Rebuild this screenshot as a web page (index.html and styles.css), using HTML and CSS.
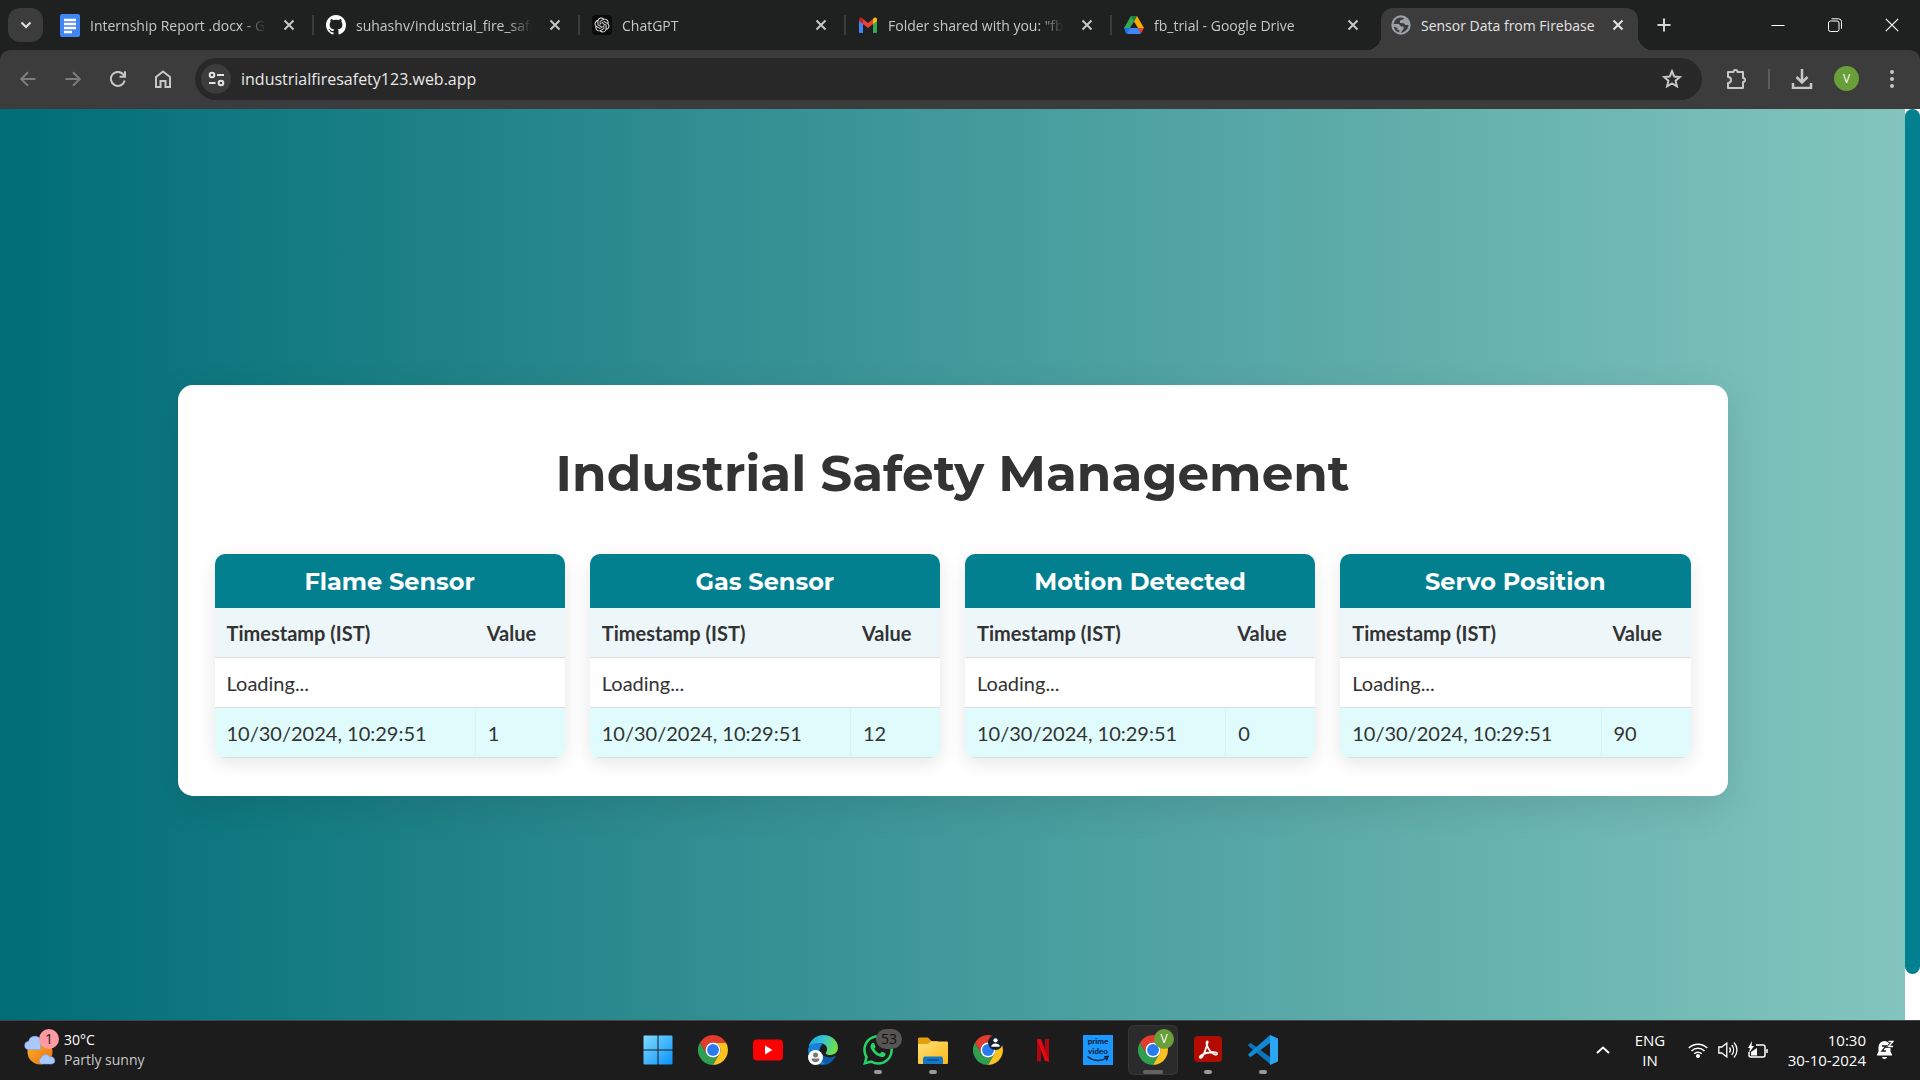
FILE: index.html
```html
<!DOCTYPE html>
<html lang="en">
<head>
<meta charset="utf-8">
<title>Sensor Data from Firebase</title>
<link rel="stylesheet" href="styles.css">
</head>
<body>
<svg class="defs" aria-hidden="true">
  <symbol id="close" viewBox="0 0 12 12"><path d="M1.5 1.5l9 9M10.5 1.5l-9 9" stroke="currentColor" stroke-width="2" fill="none"/></symbol>
  <symbol id="chrome" viewBox="0 0 48 48">
    <path fill="#2f9e4f" d="M13.61 30L3.215 12A24 24 0 0 0 24 48L34.39 30A12 12 0 0 1 13.61 30Z"/>
    <path fill="#fcc31e" d="M34.39 30L24 48A24 24 0 0 0 44.78 12H24A12 12 0 0 1 34.39 30Z"/>
    <path fill="#e33b2e" d="M24 12H44.78A24 24 0 0 0 3.215 12L13.61 30A12 12 0 0 1 24 12Z"/>
    <circle cx="24" cy="24" r="12" fill="#fff"/><circle cx="24" cy="24" r="9.5" fill="#2a7bee"/>
  </symbol>
</svg>

<header class="browser">
  <div class="tabstrip">
    <button class="tab-search" aria-label="Search tabs"><svg width="12" height="8" viewBox="0 0 12 8"><path d="M1.5 1.5L6 6l4.500-4.500" fill="none" stroke="#e3e3e3" stroke-width="2"/></svg></button>
    <nav class="tabs">
      <div class="tab">
        <svg class="favicon" viewBox="0 0 20 23"><rect width="20" height="23" rx="2" fill="#4285f4"/><path d="M4 6h12M4 10h12M4 14h12M4 18h8" stroke="#fff" stroke-width="2.300"/></svg>
        <a href="#" class="tab-title">Internship Report .docx - G</a>
        <button class="tab-close" aria-label="Close tab"><svg><use href="#close"/></svg></button>
      </div>
      <div class="tab">
        <svg class="favicon" viewBox="0 0 16 16"><path fill="#fff" d="M8 0C3.580 0 0 3.580 0 8c0 3.540 2.290 6.530 5.470 7.590.4.070.55-.17.55-.38 0-.19-.01-.82-.01-1.490-2.010.37-2.530-.49-2.690-.94-.09-.23-.48-.94-.82-1.130-.28-.15-.68-.52-.01-.53.63-.01 1.080.58 1.230.82.72 1.210 1.870.87 2.330.66.070-.52.28-.87.51-1.070-1.780-.2-3.640-.89-3.640-3.950 0-.87.31-1.590.82-2.150-.08-.2-.36-1.020.08-2.120 0 0 .67-.21 2.200.82.64-.18 1.320-.27 2-.27s1.360.09 2 .27c1.530-1.040 2.200-.82 2.200-.82.44 1.100.16 1.920.08 2.120.51.56.82 1.270.82 2.150 0 3.070-1.870 3.750-3.650 3.950.29.25.54.73.54 1.480 0 1.070-.01 1.930-.01 2.200 0 .21.15.46.55.38A8.010 8.010 0 0 0 16 8c0-4.420-3.580-8-8-8z"/></svg>
        <a href="#" class="tab-title">suhashv/industrial_fire_safe</a>
        <button class="tab-close" aria-label="Close tab"><svg><use href="#close"/></svg></button>
      </div>
      <div class="tab">
        <svg class="favicon" viewBox="-4 -4 32 32"><rect x="-4" y="-4" width="32" height="32" rx="6" fill="#0b0b0b"/><path fill="#e8e8e8" d="M22.2819 9.8211a5.9847 5.9847 0 0 0-.5157-4.9108 6.0462 6.0462 0 0 0-6.5098-2.9A6.0651 6.0651 0 0 0 4.9807 4.1818a5.9847 5.9847 0 0 0-3.9977 2.9 6.0462 6.0462 0 0 0 .7427 7.0966 5.98 5.98 0 0 0 .511 4.9107 6.051 6.051 0 0 0 6.5146 2.9001A5.9847 5.9847 0 0 0 13.2599 24a6.0557 6.0557 0 0 0 5.7718-4.2058 5.9894 5.9894 0 0 0 3.9977-2.9001 6.0557 6.0557 0 0 0-.7475-7.0729zm-9.022 12.6081a4.4755 4.4755 0 0 1-2.8764-1.0408l.1419-.0804 4.7783-2.7582a.7948.7948 0 0 0 .3927-.6813v-6.7369l2.02 1.1686a.071.071 0 0 1 .038.052v5.5826a4.504 4.504 0 0 1-4.4945 4.4944zm-9.6607-4.1254a4.4708 4.4708 0 0 1-.5346-3.0137l.142.0852 4.783 2.7582a.7712.7712 0 0 0 .7806 0l5.8428-3.3685v2.3324a.0804.0804 0 0 1-.0332.0615L9.74 19.9502a4.4992 4.4992 0 0 1-6.1408-1.6464zM2.3408 7.8956a4.485 4.485 0 0 1 2.3655-1.9728V11.6a.7664.7664 0 0 0 .3879.6765l5.8144 3.3543-2.0201 1.1685a.0757.0757 0 0 1-.071 0l-4.8303-2.7865A4.504 4.504 0 0 1 2.3408 7.872zm16.5963 3.8558L13.1038 8.364 15.1192 7.2a.0757.0757 0 0 1 .071 0l4.8303 2.7913a4.4944 4.4944 0 0 1-.6765 8.1042v-5.6772a.79.79 0 0 0-.407-.667zm2.0107-3.0231l-.142-.0852-4.7735-2.7818a.7759.7759 0 0 0-.7854 0L9.409 9.2297V6.8974a.0662.0662 0 0 1 .0284-.0615l4.8303-2.7866a4.4992 4.4992 0 0 1 6.6802 4.66zM8.3065 12.863l-2.02-1.1638a.0804.0804 0 0 1-.038-.0567V6.0742a4.4992 4.4992 0 0 1 7.3757-3.4537l-.142.0805L8.704 5.459a.7948.7948 0 0 0-.3927.6813zm1.0976-2.3654l2.602-1.4998 2.6069 1.4998v2.9994l-2.5974 1.4997-2.6067-1.4997Z"/></svg>
        <a href="#" class="tab-title">ChatGPT</a>
        <button class="tab-close" aria-label="Close tab"><svg><use href="#close"/></svg></button>
      </div>
      <div class="tab">
        <svg class="favicon" viewBox="0 0 20 20"><path fill="#4285f4" d="M1 5l4 3v10H2a1 1 0 0 1-1-1z"/><path fill="#34a853" d="M19 5l-4 3v10h3a1 1 0 0 0 1-1z"/><path fill="#ea4335" d="M5 4l5 4 5-4v5l-5 4-5-4z"/><path fill="#c5221f" d="M1 5c0-3 2.500-3 4-1v5L1 6z"/><path fill="#fbbc04" d="M19 5c0-3-2.500-3-4-1v5l4-3z"/></svg>
        <a href="#" class="tab-title">Folder shared with you: "fb</a>
        <button class="tab-close" aria-label="Close tab"><svg><use href="#close"/></svg></button>
      </div>
      <div class="tab">
        <svg class="favicon" viewBox="0 0 20 20"><path fill="#34a853" d="M7 1h3v5.500L5 14.500 0 13z"/><path fill="#188038" d="M7 1h6l-3 5.500z"/><path fill="#fbab00" d="M13 1l7 12h-6L10 6.500z"/><path fill="#1a73e8" d="M0 13h6l-3 6-1-.500z"/><path fill="#4285f4" d="M6 13h8l3 5-1 1H4l-1-1z"/><path fill="#ea4335" d="M14 13h6l-3 5.500z"/></svg>
        <a href="#" class="tab-title">fb_trial - Google Drive</a>
        <button class="tab-close" aria-label="Close tab"><svg><use href="#close"/></svg></button>
      </div>
      <div class="tab active">
        <svg class="favicon" viewBox="0 0 20 20"><circle cx="10" cy="10" r="9.700" fill="#9aa0a6"/><path fill="#3c3c3c" d="M8.500 2.500c-3 .7-5.500 3.200-6 6.500h5.300l2.400 2.500h2.300V14l-2.800 3.700c4-.2 7.600-3.500 7.800-7.700h-3L12.800 8.300 9 8V5.500l4.500-1.700c-1.500-1-3.300-1.500-5-1.300zM2.600 11.500c.5 3 2.800 5.400 5.700 6V15H6.500v-2z"/></svg>
        <a href="#" class="tab-title">Sensor Data from Firebase</a>
        <button class="tab-close" aria-label="Close tab"><svg><use href="#close"/></svg></button>
      </div>
    </nav>
    <button class="new-tab" aria-label="New tab"><svg width="14" height="14" viewBox="0 0 14 14"><path d="M7 .5v13M.5 7h13" stroke="#d5d5d5" stroke-width="2"/></svg></button>
    <div class="window-controls">
      <button aria-label="Minimize"><svg width="14" height="14" viewBox="0 0 14 14"><path d="M.5 7.500h13" stroke="#fff"/></svg></button>
      <button aria-label="Restore"><svg width="14" height="14" viewBox="0 0 14 14" fill="none" stroke="#fff"><rect x=".5" y="3" width="10.500" height="10.500" rx="2"/><path d="M3.500.8h7a3 3 0 0 1 3 3v7"/></svg></button>
      <button aria-label="Close"><svg width="14" height="14" viewBox="0 0 14 14"><path d="M.8.8l12.400 12.400M13.200.8L.8 13.200" stroke="#fff" stroke-width="1.200"/></svg></button>
    </div>
  </div>

  <div class="toolbar">
    <button class="tool dim" aria-label="Back"><svg width="16" height="16" viewBox="0 0 16 16"><path d="M15.500 8H1.500M8 1.200L1.200 8 8 14.800"/></svg></button>
    <button class="tool dim" aria-label="Forward"><svg width="16" height="16" viewBox="0 0 16 16"><path d="M.5 8h14M8 1.200L14.800 8 8 14.800"/></svg></button>
    <button class="tool" aria-label="Reload"><svg width="16" height="16" viewBox="0 0 16 16"><path d="M14.700 9.500A7 7 0 1 1 13.500 3.700L15 5.500M15 .3v5.500H9.500"/></svg></button>
    <button class="tool" aria-label="Home"><svg width="16" height="18" viewBox="0 0 16 18"><path d="M1 7l7-5.500L15 7v10h-4.500v-6h-5v6H1z"/></svg></button>
    <div class="omnibox">
      <button class="site-info" aria-label="View site information"><svg width="17" height="16" viewBox="0 0 17 16" fill="none" stroke="#e3e3e3" stroke-width="2"><circle cx="4" cy="4" r="2.300"/><path d="M9 4h7M1 12h6.500"/><circle cx="13" cy="12" r="2.300"/></svg></button>
      <input class="url" type="text" aria-label="Address" value="industrialfiresafety123.web.app">
      <button class="tool" aria-label="Bookmark"><svg width="20" height="19" viewBox="0 0 20 19"><path d="M10 2.200l2.200 5.300 5.700.5-4.300 3.700 1.300 5.600L10 14.300l-4.900 3 1.300-5.600L2.100 8l5.700-.5z"/></svg></button>
    </div>
    <button class="tool" aria-label="Extensions"><svg width="22" height="22" viewBox="0 0 22 22"><path d="M2 4h5.500a2 2 0 0 1 4 0H17v6a2 2 0 0 1 0 4v6H2v-5a3 3 0 0 0 0-6z" stroke-linejoin="round"/></svg></button>
    <span class="tool-divider"></span>
    <button class="tool" aria-label="Downloads"><svg width="22" height="20" viewBox="0 0 22 20"><path d="M11 0v13M5.500 8L11 13.500 16.500 8M2 14v5h18v-5" stroke-width="2.500"/></svg></button>
    <button class="tool" aria-label="Profile"><span class="avatar">V</span></button>
    <button class="tool" aria-label="Menu"><svg width="4" height="18" viewBox="0 0 4 18"><g fill="#c7c7c7" stroke="none"><circle cx="2" cy="2" r="2"/><circle cx="2" cy="9" r="2"/><circle cx="2" cy="16" r="2"/></g></svg></button>
  </div>
</header>

<div class="viewport">
  <main class="page">
    <section class="panel">
      <h1>Industrial Safety Management</h1>
      <div class="sensors">
        <article class="sensor">
          <h2 id="flame">Flame Sensor</h2>
          <table aria-labelledby="flame">
            <thead><tr><th>Timestamp (IST)</th><th class="value">Value</th></tr></thead>
            <tbody><tr><td colspan="2">Loading...</td></tr><tr><td>10/30/2024, 10:29:51</td><td>1</td></tr></tbody>
          </table>
        </article>
        <article class="sensor">
          <h2 id="gas">Gas Sensor</h2>
          <table aria-labelledby="gas">
            <thead><tr><th>Timestamp (IST)</th><th class="value">Value</th></tr></thead>
            <tbody><tr><td colspan="2">Loading...</td></tr><tr><td>10/30/2024, 10:29:51</td><td>12</td></tr></tbody>
          </table>
        </article>
        <article class="sensor">
          <h2 id="motion">Motion Detected</h2>
          <table aria-labelledby="motion">
            <thead><tr><th>Timestamp (IST)</th><th class="value">Value</th></tr></thead>
            <tbody><tr><td colspan="2">Loading...</td></tr><tr><td>10/30/2024, 10:29:51</td><td>0</td></tr></tbody>
          </table>
        </article>
        <article class="sensor">
          <h2 id="servo">Servo Position</h2>
          <table aria-labelledby="servo">
            <thead><tr><th>Timestamp (IST)</th><th class="value">Value</th></tr></thead>
            <tbody><tr><td colspan="2">Loading...</td></tr><tr><td>10/30/2024, 10:29:51</td><td>90</td></tr></tbody>
          </table>
        </article>
      </div>
    </section>
  </main>
  <div class="scrollbar"><div class="thumb"></div></div>
</div>

<footer class="taskbar">
  <button class="weather">
    <svg width="32" height="36" viewBox="0 0 32 36"><defs><linearGradient id="sun" x1="0" y1="0" x2="1" y2="1"><stop offset="0" stop-color="#f5b731"/><stop offset="1" stop-color="#f06c0c"/></linearGradient></defs><circle cx="16" cy="20" r="12.500" fill="url(#sun)"/><path fill="#a9c8fb" stroke="#7fa5ee" stroke-width=".6" d="M5 17.500a4 4 0 0 1-.5-8 6.500 6.500 0 0 1 12-2V17.500z"/><path fill="#a9c8fb" stroke="#7fa5ee" stroke-width=".6" d="M17 32a3.500 3.500 0 0 1 0-6 5 5 0 0 1 9-1 3.600 3.600 0 0 1 2 7z"/></svg>
    <span class="badge weather-badge">1</span>
    <span class="weather-text"><span class="temp">30°C</span><span class="sky">Partly sunny</span></span>
  </button>

  <nav class="apps">
    <button class="app" aria-label="Start"><svg viewBox="0 0 30 30"><defs><linearGradient id="win" x1="0" y1="0" x2="1" y2="1"><stop offset="0" stop-color="#7fdcff"/><stop offset="1" stop-color="#0a92fb"/></linearGradient></defs><path fill="url(#win)" d="M1.500.5h13v14H.5v-13a1 1 0 0 1 1-1zM15.500.5h13a1 1 0 0 1 1 1v13h-14zM.5 15.500h14v14h-13a1 1 0 0 1-1-1zM15.500 15.500h14v13a1 1 0 0 1-1 1h-13z"/></svg></button>
    <button class="app" aria-label="Chrome"><svg><use href="#chrome"/></svg></button>
    <button class="app" aria-label="YouTube"><svg viewBox="0 0 30 30"><rect y="4.500" width="30" height="21" rx="4" fill="#f00"/><path d="M12 10.500l7.500 4.500-7.500 4.500z" fill="#fff"/></svg></button>
    <button class="app" aria-label="Edge"><svg viewBox="0 0 30 30"><defs><linearGradient id="edge" x1="0" y1="0" x2="1" y2=".3"><stop offset="0" stop-color="#1a9fe0"/><stop offset=".5" stop-color="#35c1d8"/><stop offset="1" stop-color="#6be04b"/></linearGradient></defs><path fill="#0d5cab" d="M1 13C2 6 10 5 15 9c-5 3-4 10 1 12 4 2 8 2 12-.5C25 27 20 30 15 30 7 30 0 24 1 13z"/><path fill="#1683d8" d="M0 14c3-7 11-8 14-4-5 4-4 13 3 19C9 31 0 25 0 14z"/><path fill="url(#edge)" d="M.5 12C2 5 8 0 15 0c9 0 15 6 15 12.500 0 5-4 7.500-8 7.500-3 0-5-1.200-4-2.500 3-4 0-9.500-6.500-9.500C6 8 2 10 .5 12z"/><circle cx="7.500" cy="22.500" r="7.500" fill="#fff"/><circle cx="7.500" cy="20" r="2.500" fill="#777"/><path fill="#777" d="M3.500 23.500h8c0 5-8 5-8 0z"/></svg></button>
    <button class="app running" aria-label="WhatsApp"><svg viewBox="0 0 24 24"><path fill="#25d366" d="M17.472 14.382c-.297-.149-1.758-.867-2.030-.967-.273-.099-.471-.148-.67.15-.197.297-.767.966-.94 1.164-.173.199-.347.223-.644.075-.297-.15-1.255-.463-2.390-1.475-.883-.788-1.480-1.761-1.653-2.059-.173-.297-.018-.458.13-.606.134-.133.298-.347.446-.52.149-.174.198-.298.298-.497.099-.198.050-.371-.025-.52-.075-.149-.669-1.612-.916-2.207-.242-.579-.487-.5-.669-.51-.173-.008-.371-.01-.57-.01-.198 0-.52.074-.792.372-.272.297-1.040 1.016-1.040 2.479 0 1.462 1.065 2.875 1.213 3.074.149.198 2.096 3.200 5.077 4.487.709.306 1.262.489 1.694.625.712.227 1.360.195 1.871.118.571-.085 1.758-.719 2.006-1.413.248-.694.248-1.289.173-1.413-.074-.124-.272-.198-.57-.347m-5.421 7.403h-.004a9.870 9.870 0 0 1-5.031-1.378l-.361-.214-3.741.982.998-3.648-.235-.374a9.860 9.860 0 0 1-1.510-5.260c.001-5.450 4.436-9.884 9.888-9.884 2.640 0 5.122 1.030 6.988 2.898a9.825 9.825 0 0 1 2.893 6.994c-.003 5.450-4.437 9.884-9.885 9.884m8.413-18.297A11.815 11.815 0 0 0 12.050 0C5.495 0 .16 5.335.157 11.892c0 2.096.547 4.142 1.588 5.945L.057 24l6.305-1.654a11.882 11.882 0 0 0 5.683 1.448h.005c6.554 0 11.890-5.335 11.893-11.893a11.821 11.821 0 0 0-3.480-8.413Z"/></svg><span class="badge count">53</span></button>
    <button class="app running" aria-label="File Explorer"><svg viewBox="0 0 30 30"><defs><linearGradient id="folder" x1="0" y1="0" x2="1" y2="1"><stop offset="0" stop-color="#ffe07a"/><stop offset="1" stop-color="#fdb813"/></linearGradient></defs><path fill="#e2a10c" d="M0 4a1.500 1.500 0 0 1 1.500-1.500H10L13.500 6H20v6H0z"/><path fill="url(#folder)" d="M0 9h10l3-2.500h16a1 1 0 0 1 1 1V28a1 1 0 0 1-1 1H1a1 1 0 0 1-1-1z"/><path fill="#1478c8" d="M5 29v-5.500a2 2 0 0 1 2-2h16a2 2 0 0 1 2 2V29z"/><path d="M9 25h12" stroke="#0a4f8f" stroke-width="1.500"/></svg></button>
    <button class="app" aria-label="Chrome, second profile"><svg><use href="#chrome"/></svg><span class="badge person"><svg viewBox="0 0 14 14"><circle cx="7" cy="5" r="2" fill="#fff"/><path d="M3 11c0-4 8-4 8 0z" fill="#fff"/></svg></span></button>
    <button class="app" aria-label="Netflix"><svg viewBox="0 0 30 30"><path fill="#b1060f" d="M9 4h4v22l-4 .5zM17 4h4v22.500l-4-.5z"/><path fill="#e50914" d="M9 4h4l8 22.500-4-.5z"/></svg></button>
    <button class="app" aria-label="Prime Video"><svg viewBox="0 0 30 30"><rect width="30" height="30" fill="#1a98ff"/><text class="prime" x="15" y="9">prime</text><text class="prime" x="15" y="19">video</text><path d="M4.500 21.500c6 5 14 5 19 1.500M21 22l4-.5-1.500 4" fill="none" stroke="#0b2540" stroke-width="1.500"/></svg></button>
    <button class="app current" aria-label="Chrome, current window"><svg><use href="#chrome"/></svg><span class="badge profile">V</span></button>
    <button class="app running" aria-label="Acrobat"><svg viewBox="0 0 30 30"><rect x="1" y="1" width="28" height="26" rx="4" fill="#b30b00"/><path d="M14.500 6.500c-2.500 0 0 6.500 3 10s7 4 6.500 1.700c-.5-2-10-1-14.500 1.300s-2.500 4.500-.5 2.500 6.500-15.500 5.500-15.500z" fill="none" stroke="#fff" stroke-width="1.800"/></svg></button>
    <button class="app running" aria-label="Visual Studio Code"><svg viewBox="0 0 30 30"><path fill="#0a74bd" d="M0 10l2.500-2.300L22 22v7L1 11.500z"/><path fill="#1088d3" d="M0 20l2.500 2.300L22 8V0L1 18.500z"/><path fill="#2aa6f2" d="M22 0l8 3.500v23L22 30z"/></svg></button>
  </nav>

  <div class="tray">
    <button class="tray-more" aria-label="Show hidden icons"><svg width="14" height="8" viewBox="0 0 14 8"><path d="M1 7l6-5.500L13 7" fill="none" stroke="#fff" stroke-width="2"/></svg></button>
    <button class="language"><span>ENG</span><span>IN</span></button>
    <button class="status" aria-label="Network, volume and battery">
      <svg width="20" height="16" viewBox="0 0 20 16" fill="none" stroke="#fff" stroke-width="1.500"><path d="M.8 6a13 13 0 0 1 18.400 0M3.500 9a9.200 9.200 0 0 1 13 0M6.200 11.800a5.400 5.400 0 0 1 7.600 0"/><circle cx="10" cy="14" r="1.300" fill="#fff"/></svg>
      <svg width="20" height="18" viewBox="0 0 20 18" fill="none" stroke="#fff" stroke-width="1.300"><path d="M.8 6v6h3l5 4V2l-5 4zM11.500 6.500a4 4 0 0 1 0 5M13.800 4a8 8 0 0 1 0 10M16 1.500a11 11 0 0 1 0 15"/></svg>
      <svg width="20" height="18" viewBox="0 0 20 18" fill="none" stroke="#fff" stroke-width="1.500"><path d="M8 4h7a2 2 0 0 1 2 2v8a2 2 0 0 1-2 2H3a2 2 0 0 1-2-2v-3M19 8v4"/><path fill="#fff" stroke="none" d="M4 0L0 7h2L1 12 6 5H3.500zM3 14.500V11l6-4v7.500z"/></svg>
    </button>
    <button class="clock"><span>10:30</span><span>30-10-2024</span></button>
    <button class="bell" aria-label="Notifications"><svg width="18" height="20" viewBox="0 0 18 20"><path fill="#fff" d="M1 14.500l1.500-3V7a6 6 0 0 1 12 0v4.500l1.500 3v1H1zM6 17h5a2.500 2 0 0 1-5 0z"/><path d="M6 6h4L6 11h4" fill="none" stroke="#1c1c1c" stroke-width="1.300"/><path d="M12.500 1.500H17l-4.500 5H17" fill="none" stroke="#1c1c1c" stroke-width="3"/><path d="M12.500 1.500H17l-4.500 5H17" fill="none" stroke="#fff" stroke-width="1.300"/></svg></button>
  </div>
</footer>
</body>
</html>
```
FILE: styles.css
```css
* { box-sizing: border-box; }

body {
  margin: 0;
  min-height: 100vh;
  display: flex;
  flex-direction: column;
  color: #333;
  font-family: "Segoe UI", "Open Sans", "Noto Sans", sans-serif;
  font-size: 14px;
}

button {
  display: flex;
  align-items: center;
  justify-content: center;
  padding: 0;
  border: 0;
  background: none;
  color: inherit;
  font: inherit;
}

svg { display: block; flex: none; }
.defs { position: absolute; width: 0; height: 0; }

/* Browser window */
.browser { background: #1f2120; color: #c7c7c7; }

.tabstrip { display: flex; align-items: flex-start; height: 50px; padding: 8px 0 0 8px; }
.tab-search { width: 35px; height: 34px; border-radius: 12px; background: #3c3c3c; }
.tabs { display: flex; flex: 0 1 1590px; margin-left: 5px; min-width: 0; }

.tab {
  position: relative;
  display: flex;
  align-items: center;
  flex: 0 1 266px;
  min-width: 0;
  height: 34px;
  padding: 0 18px 0 12px;
}
.tab:not(.active)::after {
  content: "";
  position: absolute;
  right: 0;
  width: 2px;
  height: 20px;
  background: #3c3c3c;
}
.tab:nth-last-child(2)::after { visibility: hidden; }
.favicon { width: 20px; height: 20px; }
.tab:first-child .favicon { height: 23px; }
.tab-title {
  flex: 1;
  min-width: 0;
  margin: 0 16px 0 10px;
  padding-top: 2px;
  overflow: hidden;
  white-space: nowrap;
  color: inherit;
  text-decoration: none;
  line-height: 20px;
  mask-image: linear-gradient(to left, transparent, #000 24px);
}
.tab-close { width: 14px; height: 20px; }
.tab-close svg { width: 12px; height: 12px; }

.tab.active {
  flex-basis: 257px;
  height: 42px;
  margin-left: 3px;
  padding: 0 13px 8px 10px;
  border-radius: 12px 12px 0 0;
  background: #3c3c3c;
  color: #e3e3e3;
}
.tab.active .tab-title { margin-right: 12px; mask-image: none; }
.tab.active::before,
.tab.active::after {
  content: "";
  position: absolute;
  bottom: 0;
  width: 14px;
  height: 14px;
}
.tab.active::before { right: 100%; background: radial-gradient(circle at 0 0, transparent 14px, #3c3c3c 14px); }
.tab.active::after { left: 100%; background: radial-gradient(circle at 100% 0, transparent 14px, #3c3c3c 14px); }

.new-tab { width: 34px; height: 34px; margin-left: 9px; }
.window-controls { display: flex; margin-left: auto; }
.window-controls button { width: 57px; height: 34px; }

.toolbar {
  display: flex;
  align-items: center;
  height: 59px;
  padding: 0 6px 2px 5px;
  background: #3c3c3c;
  border-radius: 10px 10px 0 0;
}
.tool { width: 45px; height: 40px; }
.tool svg { fill: none; stroke: #c7c7c7; stroke-width: 2; }
.tool.dim svg { stroke: #7c7c7c; }
.omnibox {
  display: flex;
  align-items: center;
  flex: 1;
  height: 42px;
  margin: 0 12px 0 10px;
  padding: 0 8px 0 6px;
  border-radius: 21px;
  background: #282828;
}
.site-info { width: 30px; height: 30px; border-radius: 50%; background: #3c3c3c; }
.url {
  flex: 1;
  min-width: 0;
  padding: 0;
  margin-left: 10px;
  border: 0;
  outline: 0;
  background: none;
  color: #e8e8e8;
  font: inherit;
  font-size: 16px;
}
.tool-divider { width: 2px; height: 20px; margin: 0 9px; background: #5c5c5c; }
.avatar {
  width: 25px;
  border-radius: 50%;
  background: #689f38;
  color: #fff;
  font-size: 12px;
  line-height: 25px;
}

/* Page */
.viewport { display: flex; flex: 1; }
.page {
  display: flex;
  align-items: center;
  justify-content: center;
  flex: 1;
  min-width: 0;
  padding-top: 52px;
  background: linear-gradient(to right, #006d77, #83c5be);
  font-family: Lato, sans-serif;
}
.panel {
  width: 90%;
  max-width: 1550px;
  padding: 38px 37px;
  border-radius: 15px;
  background: #fff;
  box-shadow: 0 10px 38px rgba(0, 0, 0, 0.1);
}
h1, h2 { font-family: Montserrat, Inter, sans-serif; font-weight: 700; text-align: center; }
h1 { margin: 21px 0 50px; font-size: 50px; line-height: 60px; }

.sensors { display: grid; grid-template-columns: repeat(auto-fit, minmax(300px, 1fr)); gap: 25px; }
.sensor { overflow: hidden; border-radius: 10px; box-shadow: 0 5px 18px rgba(0, 0, 0, 0.1); }
h2 { margin: 0; padding: 13px 12px 11px; background: #028090; color: #fff; font-size: 24px; line-height: 30px; }

table { width: 100%; table-layout: fixed; border-spacing: 0; font-size: 20px; line-height: 25px; text-align: left; }
th, td { padding: 13px 12px 11px; border-bottom: 1px solid #ddd; }
th { background: #edf6f9; font-weight: 700; }
.value { width: 90px; }
tbody tr:nth-child(even) td { background: #e0fbfc; }
td + td { border-left: 1px solid #d9f3f5; }

.scrollbar { width: 15px; background: #fff; }
.thumb { height: 95%; border-radius: 8px; background: #028090; }

/* Taskbar */
.taskbar {
  display: grid;
  grid-template-columns: 1fr auto 1fr;
  align-items: center;
  height: 60px;
  padding-bottom: 1px;
  border-top: 1px solid #444;
  background: #1c1c1c;
  color: #fff;
  line-height: 20px;
}
.badge {
  position: absolute;
  display: block;
  height: 20px;
  border-radius: 10px;
  text-align: center;
  line-height: 20px;
}
.weather { position: relative; justify-self: start; margin-left: 24px; gap: 8px; }
.weather-badge { left: 15px; top: -1px; width: 20px; background: #ff9aa2; color: #1c1c1c; }
.weather-text { display: flex; flex-direction: column; text-align: left; }
.sky { color: #c7c7c7; }

.apps { display: flex; gap: 5px; padding-left: 1px; }
.app { position: relative; width: 50px; height: 50px; border-radius: 6px; }
.app > svg { width: 30px; height: 30px; }
.running::after,
.current::after {
  content: "";
  position: absolute;
  bottom: 1px;
  width: 8px;
  height: 4px;
  border-radius: 2px;
  background: #9a9a9a;
}
.current { background: #2b2b2b; box-shadow: inset 0 0 0 1px #363636; }
.current::after { width: 20px; background: #66625f; }
.count { left: 23px; top: 4px; width: 26px; background: #575553; color: #111; }
.person { left: 25px; top: 10px; width: 15px; height: 15px; background: #16202a; }
.profile { left: 26px; top: 4px; width: 20px; background: #689f38; font-size: 12px; }
.prime { fill: #0b2540; font-family: Lato, sans-serif; font-size: 8px; font-weight: 900; text-anchor: middle; }

.tray { display: flex; align-items: center; justify-self: end; padding-right: 26px; font-size: 15px; }
.tray-more { width: 34px; height: 40px; }
.language { flex-direction: column; width: 40px; margin-left: 10px; }
.status { gap: 10px; margin-left: 18px; }
.clock { flex-direction: column; align-items: flex-end; width: 90px; margin-left: 8px; }
.bell { margin-left: 10px; }
```
